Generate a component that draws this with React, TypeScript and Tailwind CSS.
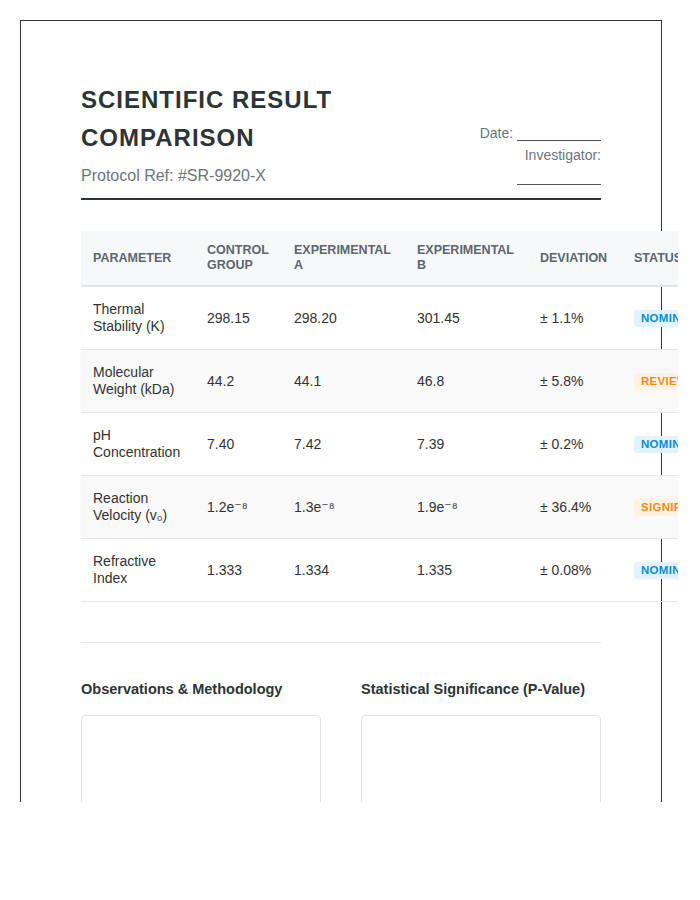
const rows = [
  { param: ["Thermal", "Stability (K)"], control: "298.15", a: "298.20", b: "301.45", dev: "± 1.1%", status: "Nominal", tone: "blue" },
  { param: ["Molecular", "Weight (kDa)"], control: "44.2", a: "44.1", b: "46.8", dev: "± 5.8%", status: "Review", tone: "orange" },
  { param: ["pH", "Concentration"], control: "7.40", a: "7.42", b: "7.39", dev: "± 0.2%", status: "Nominal", tone: "blue" },
  { param: ["Reaction", "Velocity (v₀)"], control: "1.2e⁻⁸", a: "1.3e⁻⁸", b: "1.9e⁻⁸", dev: "± 36.4%", status: "Significant", tone: "orange" },
  { param: ["Refractive", "Index"], control: "1.333", a: "1.334", b: "1.335", dev: "± 0.08%", status: "Nominal", tone: "blue" },
];

function Badge({ label, tone }: { label: string; tone: string }) {
  const cls =
    tone === "blue"
      ? "bg-[#e1f3fd] text-[#0d8bd4]"
      : "bg-[#fff2e0] text-[#f38a1c]";
  return (
    <span className={`inline-block whitespace-nowrap rounded-[3px] px-[7px] py-[2px] text-[11.5px] font-bold uppercase leading-[13px] tracking-[0.3px] ${cls}`}>
      {label}
    </span>
  );
}

export default function App() {
  return (
    <div className="h-[802px] w-[678px] overflow-hidden bg-white pl-5 pt-5 font-['Liberation_Sans','DejaVu_Sans',Arial,sans-serif] leading-[1.6] text-[#333]">
      <div className="min-h-[900px] w-[642px] border border-[#333] p-[60px]">
        {/* Header */}
        <header className="flex items-end justify-between border-b-2 border-[#2d3436] pb-[10px]">
          <div className="flex-1">
            <h1 className="text-[24px] font-bold uppercase leading-[1.6] tracking-[1px] text-[#2d3436]">
              Scientific Result Comparison
            </h1>
            <p className="mt-[5px] text-[16px] text-[#6e757b]">Protocol Ref: #SR-9920-X</p>
          </div>
          <div className="w-[130px] text-right text-[14px] leading-[22px] text-[#6e757b]">
            Date: <span className="relative top-[3px] inline-block w-[84px] border-b border-[#555]"></span> Investigator:{" "}
            <span className="relative top-[3px] inline-block w-[84px] border-b border-[#555]"></span>
          </div>
        </header>

        {/* Results table */}
        <div className="mt-[31px]">
          <table className="w-[651px] table-fixed border-collapse text-left">
            <colgroup>
              <col className="w-[114px]" />
              <col className="w-[87px]" />
              <col className="w-[123px]" />
              <col className="w-[123px]" />
              <col className="w-[94px]" />
              <col className="w-[110px]" />
            </colgroup>
            <thead>
              <tr className="bg-[#f7f8f9]">
                {["Parameter", "Control Group", "Experimental A", "Experimental B", "Deviation", "Status"].map((h) => (
                  <th
                    key={h}
                    className="border-b-2 border-[#e3e5e8] px-3 py-3 text-[12.5px] font-bold uppercase leading-[15px] text-[#5d666e]"
                  >
                    {h}
                  </th>
                ))}
              </tr>
            </thead>
            <tbody>
              {rows.map((r, i) => (
                <tr key={i} className={i % 2 === 1 ? "bg-[#f9f9f9]" : ""}>
                  <td className="border-b border-[#e6e6e6] px-3 py-[14px] text-[14px] leading-[17px]">
                    {r.param[0]}
                    <br />
                    {r.param[1]}
                  </td>
                  <td className="border-b border-[#e6e6e6] px-3 py-[14px] text-[14px] leading-[17px]">{r.control}</td>
                  <td className="border-b border-[#e6e6e6] px-3 py-[14px] text-[14px] leading-[17px]">{r.a}</td>
                  <td className="border-b border-[#e6e6e6] px-3 py-[14px] text-[14px] leading-[17px]">{r.b}</td>
                  <td className="border-b border-[#e6e6e6] px-3 py-[14px] text-[14px] leading-[17px]">{r.dev}</td>
                  <td className="border-b border-[#e6e6e6] px-3 py-[14px] text-[14px] leading-[17px]">
                    <Badge label={r.status} tone={r.tone} />
                  </td>
                </tr>
              ))}
            </tbody>
          </table>
        </div>

        {/* Notes */}
        <div className="mt-[40px] grid grid-cols-2 gap-10 border-t border-[#e6e6e6] pt-[35px]">
          <div>
            <h3 className="mb-[15px] text-[14.5px] font-bold leading-[22px] text-[#2d3436]">Observations &amp; Methodology</h3>
            <div className="h-[150px] rounded-[4px] border border-[#e3e3e3]"></div>
          </div>
          <div>
            <h3 className="mb-[15px] text-[14.5px] font-bold leading-[22px] text-[#2d3436]">Statistical Significance (P-Value)</h3>
            <div className="h-[150px] rounded-[4px] border border-[#e3e3e3]"></div>
          </div>
        </div>
      </div>
    </div>
  );
}
